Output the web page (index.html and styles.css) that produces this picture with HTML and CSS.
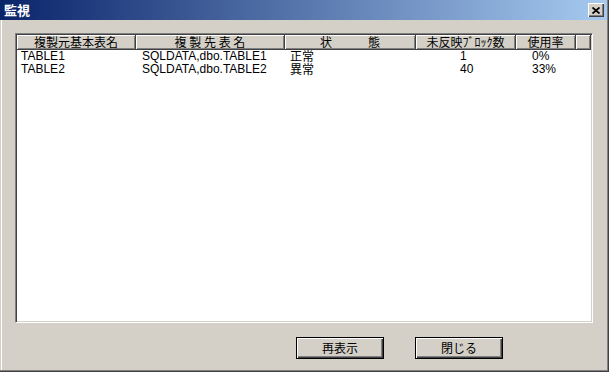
FILE: index.html
```html
<!DOCTYPE html>
<html lang="ja">
<head>
    <meta charset="UTF-8" />
    <title>監視</title>
    <link rel="stylesheet" href="styles.css">
</head>
<body>
<div class="window">
    <div class="titlebar">
        <span class="title">監視</span>
        <button class="close-btn" title="閉じる">
            <svg width="8" height="7" viewBox="0 0 8 7">
                <path d="M0.5 0.5 L7.5 6.5 M7.5 0.5 L0.5 6.5" stroke="#000" stroke-width="1.8" fill="none"/>
            </svg>
        </button>
    </div>

    <div class="dialog-body">
        <div class="listview">
            <div class="lv-header">
                <div class="lv-col">複製元基本表名</div>
                <div class="lv-col">複 製 先 表 名</div>
                <div class="lv-col">状　　　態</div>
                <div class="lv-col">未反映ﾌﾞﾛｯｸ数</div>
                <div class="lv-col">使用率</div>
                <div class="lv-col"></div>
            </div>
            <div class="lv-row">
                <div class="cell c-src">TABLE1</div>
                <div class="cell c-dst">SQLDATA,dbo.TABLE1</div>
                <div class="cell c-state">正常</div>
                <div class="cell c-count">1</div>
                <div class="cell c-rate">0%</div>
            </div>
            <div class="lv-row">
                <div class="cell c-src">TABLE2</div>
                <div class="cell c-dst">SQLDATA,dbo.TABLE2</div>
                <div class="cell c-state">異常</div>
                <div class="cell c-count">40</div>
                <div class="cell c-rate">33%</div>
            </div>
        </div>

        <div class="button-row">
            <button class="push-btn">再表示</button>
            <button class="push-btn">閉じる</button>
        </div>
    </div>
</div>
</body>
</html>
```

FILE: styles.css
```css
* {
    box-sizing: border-box;
    margin: 0;
    padding: 0;
}

body {
    background-color: #d4d0c8;
    font-family: 'Liberation Sans', 'Noto Sans CJK JP', sans-serif;
    font-size: 12px;
    color: #000;
}

.window {
    width: 609px;
    height: 372px;
    display: flex;
    flex-direction: column;
    padding: 0 2px 2px 0;
    background-color: #d4d0c8;
    box-shadow: inset -1px -1px #404040, inset -2px -2px #808080;
}

.titlebar {
    height: 20px;
    display: flex;
    align-items: center;
    justify-content: space-between;
    padding: 0 3px 0 4px;
    background: linear-gradient(to right, #0a246a, #a6caf0);
}

.title {
    color: #fff;
    font-family: 'Noto Sans CJK JP', sans-serif;
    font-weight: bold;
    font-size: 13px;
    line-height: 16px;
}

.close-btn {
    width: 16px;
    height: 14px;
    display: flex;
    align-items: center;
    justify-content: center;
    background-color: #d4d0c8;
    border: none;
    box-shadow: inset 1px 1px #fff, inset -1px -1px #404040, inset -2px -2px #808080;
}

.dialog-body {
    flex: 1;
    padding: 13px 0 0 15px;
    box-shadow: inset 1px 0 #d4d0c8, inset 2px 0 #fff;
}

.listview {
    width: 578px;
    height: 290px;
    background-color: #fff;
    border: 1px solid;
    border-color: #808080 #fff #fff #808080;
    box-shadow: inset 1px 1px #404040, inset -1px -1px #d4d0c8;
    padding: 1px;
}

.lv-header,
.lv-row {
    display: grid;
    grid-template-columns: 119px 149px 131px 100px 60px 1fr;
}

.lv-col {
    height: 15px;
    line-height: 14px;
    text-align: center;
    font-family: 'Noto Sans CJK JP', sans-serif;
    font-size: 12px;
    white-space: pre;
    background-color: #d4d0c8;
    border-right: 1px solid #404040;
    border-bottom: 1px solid #404040;
    box-shadow: inset 1px 1px #fff, inset -1px -1px #808080;
}

.lv-row {
    height: 13px;
    line-height: 13px;
}

.cell {
    white-space: nowrap;
}

.c-src {
    padding-left: 4px;
}

.c-dst {
    padding-left: 6px;
}

.c-state {
    padding-left: 5px;
    font-family: 'Noto Sans CJK JP', sans-serif;
    line-height: 12px;
}

.c-count {
    padding-left: 44px;
}

.c-rate {
    padding-left: 16px;
}

.button-row {
    display: flex;
    gap: 31px;
    margin: 14px 0 0 281px;
}

.push-btn {
    width: 88px;
    height: 22px;
    background-color: #d4d0c8;
    border: 1px solid #000;
    box-shadow: inset 1px 1px #fff, inset -1px -1px #404040, inset -2px -2px #808080;
    font-family: 'Noto Sans CJK JP', sans-serif;
    font-size: 12px;
    line-height: 18px;
    color: #000;
}
```
